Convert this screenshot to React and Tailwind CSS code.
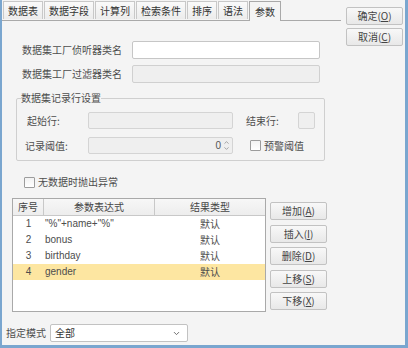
import { ChevronDown, ChevronUp } from "lucide-react";

const tabs = ["数据表", "数据字段", "计算列", "检索条件", "排序", "语法", "参数"];

const rows = [
  { no: 1, expr: "\"%\"+name+\"%\"", type: "默认" },
  { no: 2, expr: "bonus", type: "默认" },
  { no: 3, expr: "birthday", type: "默认" },
  { no: 4, expr: "gender", type: "默认", sel: true },
];

const cjk = { fontFamily: '"Noto Sans CJK SC", "Liberation Sans", sans-serif' };
const latin = { fontFamily: '"Liberation Sans", "Noto Sans CJK SC", sans-serif' };

function Btn({ label, k, className = "" }) {
  return (
    <button
      className={`w-[57px] h-[18px] border border-[#c2c2c2] bg-gradient-to-b from-[#f8f8f8] to-[#e8e8e8] rounded-[2px] text-[10px] leading-none text-[#444] ${className}`}
    >
      {label}(<span className="underline">{k}</span>)
    </button>
  );
}

function Check({ label }) {
  return (
    <label className="flex items-center gap-[3px] h-[12px]">
      <span className="w-[11px] h-[11px] border border-[#9c9c9c] bg-gradient-to-b from-[#f2f2f2] to-white rounded-[1px]" />
      <span>{label}</span>
    </label>
  );
}

export default function App() {
  return (
    <div
      className="w-[408px] h-[348px] bg-[#f4f4f4] border-l-2 border-r-[3px] border-b-[3px] border-[#7aa6cf] text-[10px] leading-[12px] text-[#4d4d4d] flex overflow-hidden"
      style={cjk}
    >
      {/* main column */}
      <div className="w-[339px] flex flex-col">
        {/* tab strip */}
        <div className="flex items-end pl-[1px] gap-[1px] h-[21px] border-b border-[#a9a9a9]">
          {tabs.map((t, i) =>
            i === tabs.length - 1 ? (
              <div
                key={t}
                className="px-[5px] h-[20px] -mb-px flex items-center border border-b-0 border-[#a9a9a9] bg-[#f4f4f4] text-[#333]"
              >
                {t}
              </div>
            ) : (
              <div
                key={t}
                className="px-[4px] h-[18px] mb-px flex items-center border border-b-0 border-[#c8c8c8] bg-gradient-to-b from-[#fafafa] to-[#ececec] text-[#333]"
              >
                {t}
              </div>
            )
          )}
        </div>

        {/* class name inputs */}
        <div className="flex items-center h-[18px] mt-[20px]">
          <span className="w-[130px] pl-[20px]">数据集工厂侦听器类名</span>
          <div className="w-[188px] h-[18px] bg-white border border-[#c6c6c6] rounded-[2px]" />
        </div>
        <div className="flex items-center h-[18px] mt-[6px]">
          <span className="w-[130px] pl-[20px]">数据集工厂过滤器类名</span>
          <div className="w-[188px] h-[18px] bg-[#efefef] border border-[#d0d0d0] rounded-[2px]" />
        </div>

        {/* record row group */}
        <fieldset className="mt-[9px] ml-[14px] w-[309px] border border-[#cfcfcf] rounded-[2px] pb-[6px]">
          <legend className="ml-[4px] leading-[12px]">数据集记录行设置</legend>
          <div className="flex items-center h-[17px] mt-[8px]">
            <span className="w-[71px] pl-[10px]">起始行:</span>
            <div className="w-[145px] h-[17px] bg-[#efefef] border border-[#d4d4d4] rounded-[2px]" />
            <span className="ml-[13px] w-[52px]">结束行:</span>
            <div className="w-[17px] h-[17px] bg-[#efefef] border border-[#d4d4d4] rounded-[2px]" />
          </div>
          <div className="flex items-center h-[17px] mt-[8px]">
            <span className="w-[71px] pl-[8px]">记录阈值:</span>
            <div className="w-[145px] h-[17px] bg-[#efefef] border border-[#d4d4d4] rounded-[2px] flex items-center justify-end pr-[2px] gap-[2px]">
              <span className="text-[#555]" style={latin}>0</span>
              <span className="flex flex-col text-[#888] -space-y-[1px]">
                <ChevronUp size={7} strokeWidth={2.5} />
                <ChevronDown size={7} strokeWidth={2.5} />
              </span>
            </div>
            <span className="ml-[17px]">
              <Check label="预警阈值" />
            </span>
          </div>
        </fieldset>

        <div className="mt-[15px] ml-[22px]">
          <Check label="无数据时抛出异常" />
        </div>

        {/* parameter table */}
        <div className="flex mt-[10px] ml-[10px]">
          <div className="w-[254px] h-[114px] bg-white border border-[#a9a9a9]">
            <div className="flex h-[17px] items-center bg-gradient-to-b from-[#f7f7f7] to-[#ededed] border-b border-[#c8c8c8] text-[#444]">
              <div className="w-[31px] h-full flex items-center justify-center border-r border-[#c8c8c8]">序号</div>
              <div className="w-[111px] h-full flex items-center justify-center border-r border-[#c8c8c8]">参数表达式</div>
              <div className="flex-1 text-center">结果类型</div>
            </div>
            {rows.map((r) => (
              <div
                key={r.no}
                className={`flex h-[16px] items-center whitespace-nowrap ${r.sel ? "bg-[#fde6a1]" : ""}`}
                style={latin}
              >
                <div className="w-[31px] text-center">{r.no}</div>
                <div className="w-[111px] pl-[1px]">{r.expr}</div>
                <div className="flex-1 text-center" style={cjk}>
                  {r.type}
                </div>
              </div>
            ))}
          </div>
          <div className="flex flex-col gap-[4.5px] pt-[4px] ml-[4px]">
            <Btn label="增加" k="A" />
            <Btn label="插入" k="I" />
            <Btn label="删除" k="D" />
            <Btn label="上移" k="S" />
            <Btn label="下移" k="X" />
          </div>
        </div>

        {/* mode select */}
        <div className="flex items-center mt-[12px] ml-[4px] gap-[4px]">
          <span>指定模式</span>
          <div className="w-[138px] h-[18px] bg-white border border-[#c2c2c2] rounded-[2px] flex items-center justify-between pl-[4px] pr-[6px]">
            <span className="text-[#333]">全部</span>
            <ChevronDown size={9} strokeWidth={2.5} className="text-[#666]" />
          </div>
        </div>
      </div>

      {/* dialog buttons */}
      <div className="flex flex-col gap-[3px] ml-[5px] mt-[7px]">
        <Btn label="确定" k="O" className="w-[54px] h-[17px] from-[#e8e8e8] to-[#d6d6d6] border-[#a4acb4]" />
        <Btn label="取消" k="C" className="w-[54px] h-[17px]" />
      </div>
    </div>
  );
}
